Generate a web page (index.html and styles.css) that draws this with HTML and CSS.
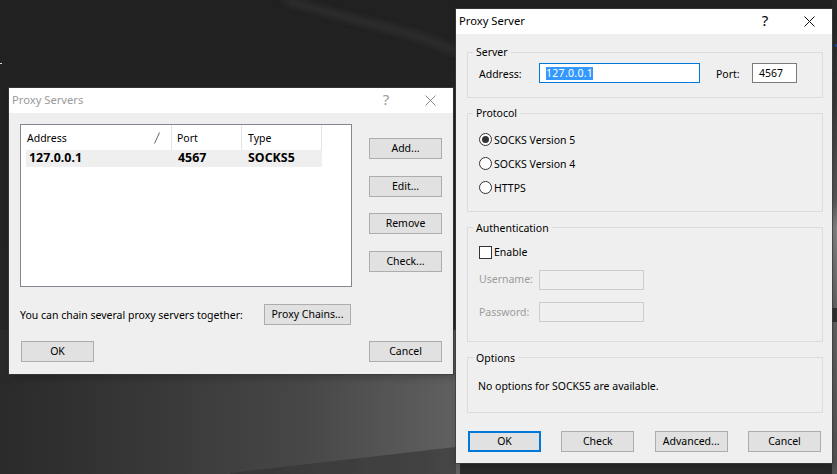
FILE: index.html
```html
<!DOCTYPE html>
<html lang="en">
<head>
<meta charset="utf-8">
<title>Proxy Servers</title>
<link rel="stylesheet" href="styles.css">
</head>
<body>
<div class="desktop">
  <svg class="wallpaper" width="837" height="474" viewBox="0 0 837 474" aria-hidden="true">
    <defs>
      <linearGradient id="wall" x1="0" y1="0" x2="0" y2="1">
        <stop offset="0" stop-color="#212121"/>
        <stop offset="0.65" stop-color="#252525"/>
        <stop offset="1" stop-color="#2a2a2a"/>
      </linearGradient>
      <linearGradient id="floor" x1="0" y1="0" x2="1" y2="0">
        <stop offset="0" stop-color="#2a2a2a"/>
        <stop offset="0.33" stop-color="#383838"/>
        <stop offset="0.66" stop-color="#474747"/>
        <stop offset="1" stop-color="#616161"/>
      </linearGradient>
      <linearGradient id="band" x1="0" y1="0" x2="1" y2="0">
        <stop offset="0" stop-color="#363636"/>
        <stop offset="1" stop-color="#454545"/>
      </linearGradient>
      <linearGradient id="strip" x1="0" y1="0" x2="0" y2="1">
        <stop offset="0" stop-color="#252525"/>
        <stop offset="0.2" stop-color="#3a3a3a"/>
        <stop offset="0.42" stop-color="#5a5a5a"/>
        <stop offset="0.48" stop-color="#8a8a8a"/>
        <stop offset="0.65" stop-color="#686868"/>
        <stop offset="0.65" stop-color="#333333"/>
        <stop offset="0.68" stop-color="#333333"/>
        <stop offset="0.68" stop-color="#666666"/>
        <stop offset="1" stop-color="#555555"/>
      </linearGradient>
      <filter id="softer" x="-10%" y="-50%" width="120%" height="200%"><feGaussianBlur stdDeviation="3"/></filter>
      <filter id="edge" x="-10%" y="-50%" width="120%" height="200%"><feGaussianBlur stdDeviation="0.7"/></filter>
    </defs>
    <rect width="837" height="474" fill="url(#wall)"/>
    <rect x="0" y="330" width="460" height="144" fill="url(#floor)"/>
    <path d="M285 0 Q340 16 380 26 Q430 38 456 52" fill="none" stroke="#2e2e2e" stroke-width="7" filter="url(#softer)"/>
    <path d="M230 473 L456 447 L456 480 L230 480 Z" fill="url(#band)" filter="url(#edge)"/>
    <rect x="832" y="0" width="5" height="474" fill="url(#strip)"/>
    <rect x="835" y="44" width="2" height="3" fill="#1a4a9a"/>
    <rect x="0" y="63" width="2" height="1" fill="#c8e6c0"/>
  </svg>

  <section class="window window-servers inactive">
    <header class="titlebar">
      <span class="title">Proxy Servers</span>
      <span class="help">?</span>
      <svg class="close" width="11" height="11" viewBox="0 0 11 11" aria-hidden="true"><path d="M0.5 0.5 L10.5 10.5 M10.5 0.5 L0.5 10.5"/></svg>
    </header>
    <div class="servers-body">
      <div class="servers-top">
        <div class="listbox">
          <div class="list-row list-head">
            <span class="cell cell-address">Address<svg class="sort" width="6" height="12" viewBox="0 0 6 12" aria-hidden="true"><path d="M5.5 0.5 L0.5 11.5"/></svg></span>
            <span class="cell cell-port">Port</span>
            <span class="cell cell-type">Type</span>
          </div>
          <div class="list-row list-item">
            <span class="cell cell-address">127.0.0.1</span>
            <span class="cell cell-port">4567</span>
            <span class="cell cell-type">SOCKS5</span>
          </div>
        </div>
        <div class="side-buttons">
          <button class="btn">Add...</button>
          <button class="btn">Edit...</button>
          <button class="btn">Remove</button>
          <button class="btn">Check...</button>
        </div>
      </div>
      <div class="chain-row">
        <span>You can chain several proxy servers together:</span>
        <button class="btn btn-chains">Proxy Chains...</button>
      </div>
      <div class="servers-actions">
        <button class="btn">OK</button>
        <button class="btn">Cancel</button>
      </div>
    </div>
  </section>

  <section class="window window-server">
    <header class="titlebar">
      <span class="title">Proxy Server</span>
      <span class="help">?</span>
      <svg class="close" width="11" height="11" viewBox="0 0 11 11" aria-hidden="true"><path d="M0.5 0.5 L10.5 10.5 M10.5 0.5 L0.5 10.5"/></svg>
    </header>
    <div class="server-body">
      <div class="group group-server">
        <span class="legend">Server</span>
        <div class="server-fields">
          <span class="field-label">Address:</span>
          <div class="input input-address"><span class="selected">127.0.0.1</span></div>
          <span class="port-label">Port:</span>
          <div class="input input-port">4567</div>
        </div>
      </div>
      <div class="group group-protocol">
        <span class="legend">Protocol</span>
        <div class="option"><span class="radio checked"></span><span class="option-text">SOCKS Version 5</span></div>
        <div class="option"><span class="radio"></span><span class="option-text">SOCKS Version 4</span></div>
        <div class="option"><span class="radio"></span><span class="option-text">HTTPS</span></div>
      </div>
      <div class="group group-auth">
        <span class="legend">Authentication</span>
        <div class="option"><span class="checkbox"></span>Enable</div>
        <div class="cred-row"><span class="field-label">Username:</span><div class="input input-cred"></div></div>
        <div class="cred-row"><span class="field-label">Password:</span><div class="input input-cred"></div></div>
      </div>
      <div class="group group-options">
        <span class="legend">Options</span>
        <p class="options-note">No options for SOCKS5 are available.</p>
      </div>
      <div class="server-actions">
        <button class="btn btn-default">OK</button>
        <button class="btn">Check</button>
        <button class="btn">Advanced...</button>
        <button class="btn">Cancel</button>
      </div>
    </div>
  </section>
</div>
</body>
</html>
```
FILE: styles.css
```css
* { box-sizing: border-box; }
html, body { margin: 0; padding: 0; }
body {
  width: 837px;
  height: 474px;
  overflow: hidden;
  font-family: "Noto Sans", "Open Sans", sans-serif;
  font-size: 10.5px;
  color: #000;
}
.desktop { position: relative; width: 837px; height: 474px; overflow: hidden; }
.wallpaper { position: absolute; left: 0; top: 0; display: block; }

.window {
  position: absolute;
  background: #efefef;
  box-shadow: 0 0 0 1px rgba(60, 60, 60, 0.75), 2px 3px 8px rgba(0, 0, 0, 0.25);
}
.window-servers { left: 9px; top: 88px; width: 444px; height: 286px; }
.window-server { left: 456px; top: 9px; width: 376px; height: 454px; }

.titlebar {
  display: flex;
  align-items: center;
  height: 25px;
  background: #fff;
  padding-left: 3px;
  position: relative;
}
.title { font-size: 11.2px; flex: 1; position: relative; top: -1px; }
.help { font-size: 15px; width: 10px; text-align: center; line-height: 1; margin-right: 34px; position: relative; top: -1px; }
.close { margin-right: 17px; display: block; }
.close path { stroke: #111; stroke-width: 1; fill: none; }
.inactive .title, .inactive .help { color: #9a9a9a; }
.inactive .close path { stroke: #8a8a8a; }

.btn {
  display: block;
  width: 73px;
  height: 21px;
  padding: 0;
  border: 1px solid #adadad;
  border-radius: 0;
  background: #e1e1e1;
  font: inherit;
  color: #000;
  line-height: 17px;
  text-align: center;
}

.servers-body { padding: 11px 11px 0; }
.servers-top { display: flex; gap: 17px; }
.listbox {
  width: 332px;
  height: 163px;
  background: #fff;
  border: 1px solid #828790;
  padding: 0 0 0 5px;
}
.list-row { display: grid; grid-template-columns: 146px 70px 80px; width: 296px; }
.list-head { height: 25px; }
.list-head .cell { display: flex; align-items: center; padding-left: 1px; border-right: 1px solid #e5e5e5; position: relative; }
.list-head .cell-port { padding-left: 5px; }
.list-head .cell-type { padding-left: 6px; }
.sort { position: absolute; left: 128px; top: 7px; }
.sort path { stroke: #666; stroke-width: 1; fill: none; }
.list-item { height: 17px; background: #efefef; font-weight: 700; font-size: 12.4px; line-height: 16px; }
.list-item .cell-address { padding-left: 3px; }
.list-item .cell-port { padding-left: 6px; }
.list-item .cell-type { padding-left: 6px; }

.side-buttons { display: flex; flex-direction: column; gap: 16.5px; padding-top: 14px; }
.chain-row {
  display: flex;
  align-items: center;
  justify-content: space-between;
  width: 331px;
  margin-top: 17px;
}
.btn-chains { width: 87px; }
.servers-actions {
  display: flex;
  justify-content: space-between;
  margin: 16px 0 0 1px;
}

.server-body { padding: 18px 10px 0 11px; }
.group {
  position: relative;
  width: 356px;
  border: 1px solid #dcdcdc;
}
.legend {
  position: absolute;
  left: 5px;
  top: -9px;
  padding: 0 3px;
  background: #efefef;
  line-height: 16px;
}
.group-server { height: 46px; }
.group-protocol { height: 99px; margin-top: 15px; padding: 13px 0 0 11px; }
.group-auth { height: 115px; margin-top: 15px; padding: 17px 0 0 11px; }
.group-auth .legend, .group-options .legend { top: -8px; }
.group-options { height: 56px; margin-top: 15px; }

.server-fields { display: flex; align-items: center; padding: 10px 0 0 11px; }
.server-fields .field-label { width: 60px; padding-top: 2px; }
.port-label { margin-left: 16px; width: 36px; padding-top: 2px; }
.input {
  height: 20px;
  background: #fff;
  border: 1px solid #7a7a7a;
  padding: 0 0 0 6px;
  line-height: 18px;
}
.input-address { width: 161px; border-color: #0078d7; }
.input-port { width: 45px; }
.selected { background: #3399ff; color: #fff; display: inline-block; line-height: 13px; letter-spacing: 0.3px; }

.option { display: flex; align-items: center; height: 24px; gap: 2px; line-height: 13px; }
.option-text { padding-top: 2px; }
.radio {
  position: relative;
  width: 13px;
  height: 13px;
  border: 1px solid #333;
  border-radius: 50%;
  background: #fff;
}
.radio.checked::after {
  content: "";
  position: absolute;
  left: 2px;
  top: 2px;
  width: 7px;
  height: 7px;
  border-radius: 50%;
  background: #333;
}
.checkbox { width: 13px; height: 13px; border: 1px solid #333; background: #fff; }
.group-auth .option { height: 14px; }
.cred-row { display: flex; align-items: center; margin-top: 12px; color: #9c9c9c; }
.group-auth .option + .cred-row { margin-top: 11px; }
.cred-row + .cred-row { margin-top: 12px; }
.cred-row .field-label { width: 60px; padding-bottom: 2px; }
.cred-row + .cred-row .field-label { padding-bottom: 0; }
.input-cred { width: 105px; background: #efefef; border-color: #cccccc; }

.options-note { margin: 0; padding: 20px 0 0 10px; line-height: 16px; }

.server-actions {
  display: flex;
  width: 353px;
  margin: 18px 0 0 1px;
  justify-content: space-between;
}
.btn-default { border: 2px solid #0078d7; }
```
